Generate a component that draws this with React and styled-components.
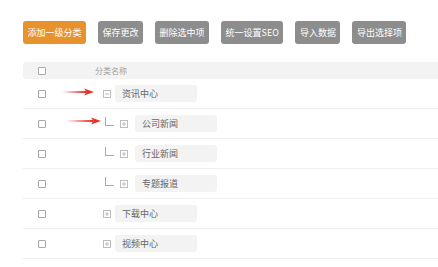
import styled, { createGlobalStyle } from "styled-components";

const GlobalStyle = createGlobalStyle`
  body {
    margin: 0;
    background: #fff;
    font-family: "Noto Sans CJK SC", "Liberation Sans", sans-serif;
  }
`;

const Page = styled.div`
  padding: 21px 0 0 23px;
`;

const Toolbar = styled.div`
  display: flex;
  gap: 12px;
`;

const Button = styled.button`
  height: 23px;
  padding: 0 4.5px;
  border: none;
  border-radius: 3px;
  background: ${(p) => (p.$primary ? "#e8922e" : "#8d8d8d")};
  color: #fff;
  font-family: "Noto Sans CJK SC", "Liberation Sans", sans-serif;
  font-size: 9px;
  line-height: 23px;
  white-space: nowrap;
`;

const Table = styled.div`
  margin-top: 18px;
`;

const Header = styled.div`
  display: flex;
  align-items: center;
  height: 17px;
  background: #f3f3f3;
  border-radius: 3px 0 0 3px;
`;

const Row = styled.div`
  display: flex;
  align-items: center;
  height: 29px;
  border-bottom: 1px solid #eeeeee;
`;

const CheckCell = styled.div`
  width: 72px;
  padding-left: 15px;
  box-sizing: border-box;
  display: flex;
  align-items: center;
`;

const Check = styled.span`
  width: 8px;
  height: 8px;
  border: 1px solid #a8a8a8;
  box-sizing: border-box;
  border-radius: 1px;
  background: #fff;
`;

const HeadTitle = styled.span`
  font-size: 8px;
  color: #a0a0a0;
`;

const NameCell = styled.div`
  position: relative;
  flex: 1;
  height: 100%;
  display: flex;
  align-items: center;
  padding-left: ${(p) => (p.$level ? 10 : 8)}px;
`;

const Connector = styled.span`
  align-self: flex-start;
  margin-top: 8px;
  width: 8px;
  height: 8px;
  border-left: 1px solid #a9a9a9;
  border-bottom: 1px solid #a9a9a9;
  margin-right: 6px;
`;

const Toggle = styled.svg`
  width: 8px;
  height: 8px;
  margin-right: 4px;
  flex-shrink: 0;
`;

const NameBox = styled.div`
  width: 82px;
  height: 17px;
  margin-left: ${(p) => (p.$level ? 3 : 0)}px;
  padding-left: 7px;
  box-sizing: border-box;
  border-radius: 3px;
  background: #f3f3f3;
  color: #666;
  font-size: 9px;
  line-height: 17px;
`;

const Arrow = styled.svg`
  position: absolute;
  top: 50%;
  margin-top: ${(p) => p.$dy}px;
  left: ${(p) => p.$left}px;
  width: ${(p) => p.$w}px;
  height: 8px;
`;

function ToggleIcon({ open }) {
  return (
    <Toggle viewBox="0 0 8 8">
      <rect x="0.5" y="0.5" width="7" height="7" fill="none" stroke="#bdbdbd" />
      <line x1="2" y1="4" x2="6" y2="4" stroke="#bdbdbd" />
      {!open && <line x1="4" y1="2" x2="4" y2="6" stroke="#bdbdbd" />}
    </Toggle>
  );
}

function RedArrow({ left, w, dy }) {
  return (
    <Arrow $left={left} $w={w} $dy={dy} viewBox={`0 0 ${w} 8`}>
      <path d={`M0 4 L${w - 8} 3.1 L${w - 8} 4.9 Z`} fill="#e8302a" />
      <path d={`M${w - 10} 0.5 L${w} 4 L${w - 10} 7.5 L${w - 7.5} 4 Z`} fill="#e8302a" />
    </Arrow>
  );
}

const rows = [
  { name: "资讯中心", level: 0, open: true, arrow: { left: -33, w: 32, dy: -6 } },
  { name: "公司新闻", level: 1, arrow: { left: -29, w: 35, dy: -6.5 } },
  { name: "行业新闻", level: 1 },
  { name: "专题报道", level: 1 },
  { name: "下载中心", level: 0 },
  { name: "视频中心", level: 0 },
];

const actions = ["添加一级分类", "保存更改", "删除选中项", "统一设置SEO", "导入数据", "导出选择项"];

export default function App() {
  return (
    <>
      <GlobalStyle />
      <Page>
        <Toolbar>
          {actions.map((a, i) => (
            <Button key={a} $primary={i === 0}>
              {a}
            </Button>
          ))}
        </Toolbar>
        <Table>
          <Header>
            <CheckCell>
              <Check />
            </CheckCell>
            <HeadTitle>分类名称</HeadTitle>
          </Header>
          {rows.map((r) => (
            <Row key={r.name}>
              <CheckCell>
                <Check />
              </CheckCell>
              <NameCell $level={r.level}>
                {r.arrow && <RedArrow {...r.arrow} />}
                {r.level > 0 && <Connector />}
                <ToggleIcon open={r.open} />
                <NameBox $level={r.level}>{r.name}</NameBox>
              </NameCell>
            </Row>
          ))}
        </Table>
      </Page>
    </>
  );
}
